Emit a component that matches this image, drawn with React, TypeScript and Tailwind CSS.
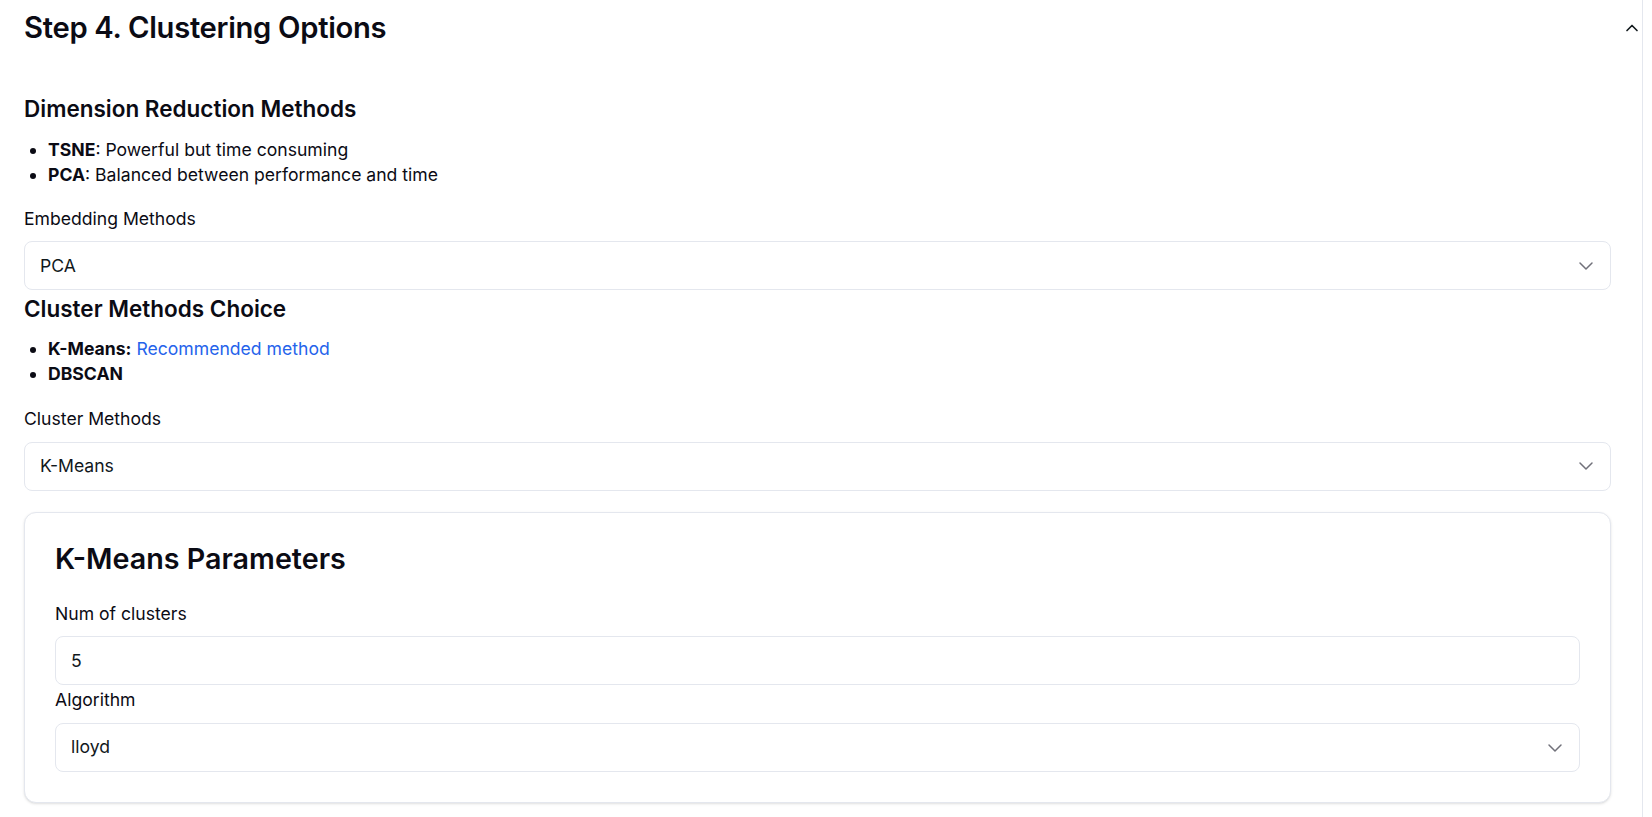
import { ChevronDown, ChevronUp } from "lucide-react";

function SelectBox({ value, className = "" }: { value: string; className?: string }) {
  return (
    <div
      className={`flex h-[49px] items-center justify-between rounded-lg border border-[#e4e7ee] bg-white pl-[15px] pr-3 ${className}`}
    >
      <span className="text-[17.6px] text-[#11181c]">{value}</span>
      <ChevronDown className="h-6 w-6 text-[#71717a]" strokeWidth={1.5} />
    </div>
  );
}

function InputBox({ value, className = "" }: { value: string; className?: string }) {
  return (
    <div
      className={`flex h-[49px] items-center rounded-lg border border-[#e4e7ee] bg-white pl-[15px] pr-3 ${className}`}
    >
      <span className="text-[17.6px] text-[#11181c]">{value}</span>
    </div>
  );
}

export default function App() {
  return (
    <div className="min-h-screen w-[1643px] border-r border-[#e4e7ee] bg-white font-['Inter',sans-serif] text-[#0b0b14]">
      {/* Accordion header */}
      <div className="flex items-center justify-between pl-6 pt-[10px]">
        <h1 className="text-[29.2px] leading-9 font-semibold tracking-[-0.01em]">
          Step 4. Clustering Options
        </h1>
        <ChevronUp className="h-5 w-5 text-[#11181c]" strokeWidth={2} />
      </div>

      <div className="pl-6 pr-[31px] pt-[49px] pb-4">
        <h2 className="text-[22.5px] leading-7 font-semibold">Dimension Reduction Methods</h2>
        <ul className="mt-[15px] list-disc pl-6 text-[17.6px] leading-[24.75px]">
          <li>
            <b className="font-bold">TSNE</b>: Powerful but time consuming
          </li>
          <li>
            <b className="font-bold">PCA</b>: Balanced between performance and time
          </li>
        </ul>

        <div className="mt-[19px] text-[17.6px] leading-[24.75px]">Embedding Methods</div>
        <SelectBox value="PCA" className="mt-[10px]" />

        <h2 className="mt-[5px] text-[22.5px] leading-7 font-semibold">Cluster Methods Choice</h2>
        <ul className="mt-[14px] list-disc pl-6 text-[17.6px] leading-[24.75px]">
          <li>
            <b className="font-bold">K-Means:</b>{" "}
            <span className="text-[#2563eb]">Recommended method</span>
          </li>
          <li>
            <b className="font-bold">DBSCAN</b>
          </li>
        </ul>

        <div className="mt-5 text-[17.6px] leading-[24.75px]">Cluster Methods</div>
        <SelectBox value="K-Means" className="mt-[10px]" />

        {/* Parameters card */}
        <div className="mt-[21px] rounded-xl border border-[#e4e7ee] bg-white px-[30px] pt-7 pb-[30px] shadow-sm">
          <h3 className="text-[28.7px] leading-9 font-semibold">K-Means Parameters</h3>
          <div className="mt-[25px] text-[17.6px] leading-[24.75px]">Num of clusters</div>
          <InputBox value="5" className="mt-[10px]" />
          <div className="mt-[3px] text-[17.6px] leading-[24.75px]">Algorithm</div>
          <SelectBox value="lloyd" className="mt-[10px]" />
        </div>
      </div>
    </div>
  );
}
